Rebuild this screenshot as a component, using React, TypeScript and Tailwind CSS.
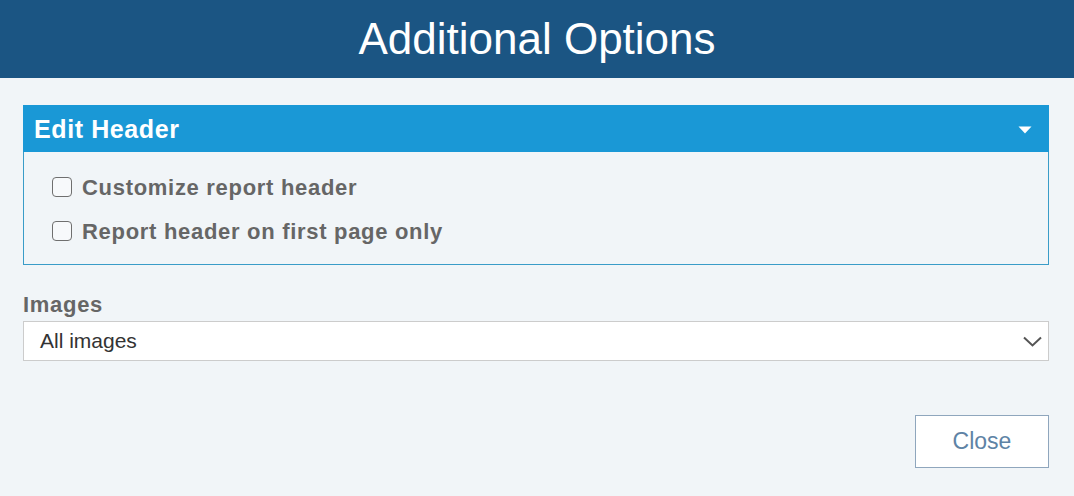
export default function App() {
  return (
    <main className="min-h-screen w-full bg-[#f1f5f8] font-['Liberation_Sans',Arial,sans-serif]">
      {/* Title bar */}
      <header className="h-[78px] bg-[#1b5583] flex items-center justify-center">
        <h1 className="text-[44px] leading-none text-white">Additional Options</h1>
      </header>

      <div className="pl-[23px] pr-[25px] pt-[27px]">
        {/* Edit Header panel */}
        <section className="border border-[#3a9cc8]">
          <div className="h-[46px] bg-[#1a98d6] flex items-center justify-between pl-[10px] pr-[16px] -mx-px -mt-px box-content border-t border-x border-[#1a98d6]">
            <h2 className="text-[25px] font-bold tracking-[0.6px] text-white mt-[2px]">Edit Header</h2>
            <svg width="14" height="8" viewBox="0 0 14 8" className="mt-px">
              <path d="M0.5 0.5 L13.5 0.5 L7 7.5 Z" fill="#ffffff" />
            </svg>
          </div>
          <div className="pt-[13px] pb-[11px] pl-[28px]">
            {["Customize report header", "Report header on first page only"].map((label) => (
              <label key={label} className="h-11 flex items-center gap-[10px] cursor-pointer">
                <span className="w-5 h-5 rounded-[4px] border border-[#6f6f6f] bg-[#f7f9fb] shrink-0" />
                <span className="text-[22px] font-bold tracking-[0.7px] text-[#666666]">{label}</span>
              </label>
            ))}
          </div>
        </section>

        {/* Images select */}
        <div className="mt-[27px]">
          <div className="text-[22px] leading-[26px] font-bold tracking-[0.7px] text-[#666666]">Images</div>
          <div className="mt-[3px] h-10 bg-white border border-[#cccccc] flex items-center justify-between pl-4 pr-[6px]">
            <span className="text-[21px] text-[#333333]">All images</span>
            <svg width="19" height="11" viewBox="0 0 19 11">
              <path d="M1 1.5 L9.5 9.5 L18 1.5" fill="none" stroke="#555555" strokeWidth="2" />
            </svg>
          </div>
        </div>

        {/* Footer */}
        <div className="mt-[54px] flex justify-end">
          <button className="w-[134px] h-[53px] bg-white border border-[#8fa6bd] text-[23px] text-[#5e83a5]">
            Close
          </button>
        </div>
      </div>
    </main>
  );
}
